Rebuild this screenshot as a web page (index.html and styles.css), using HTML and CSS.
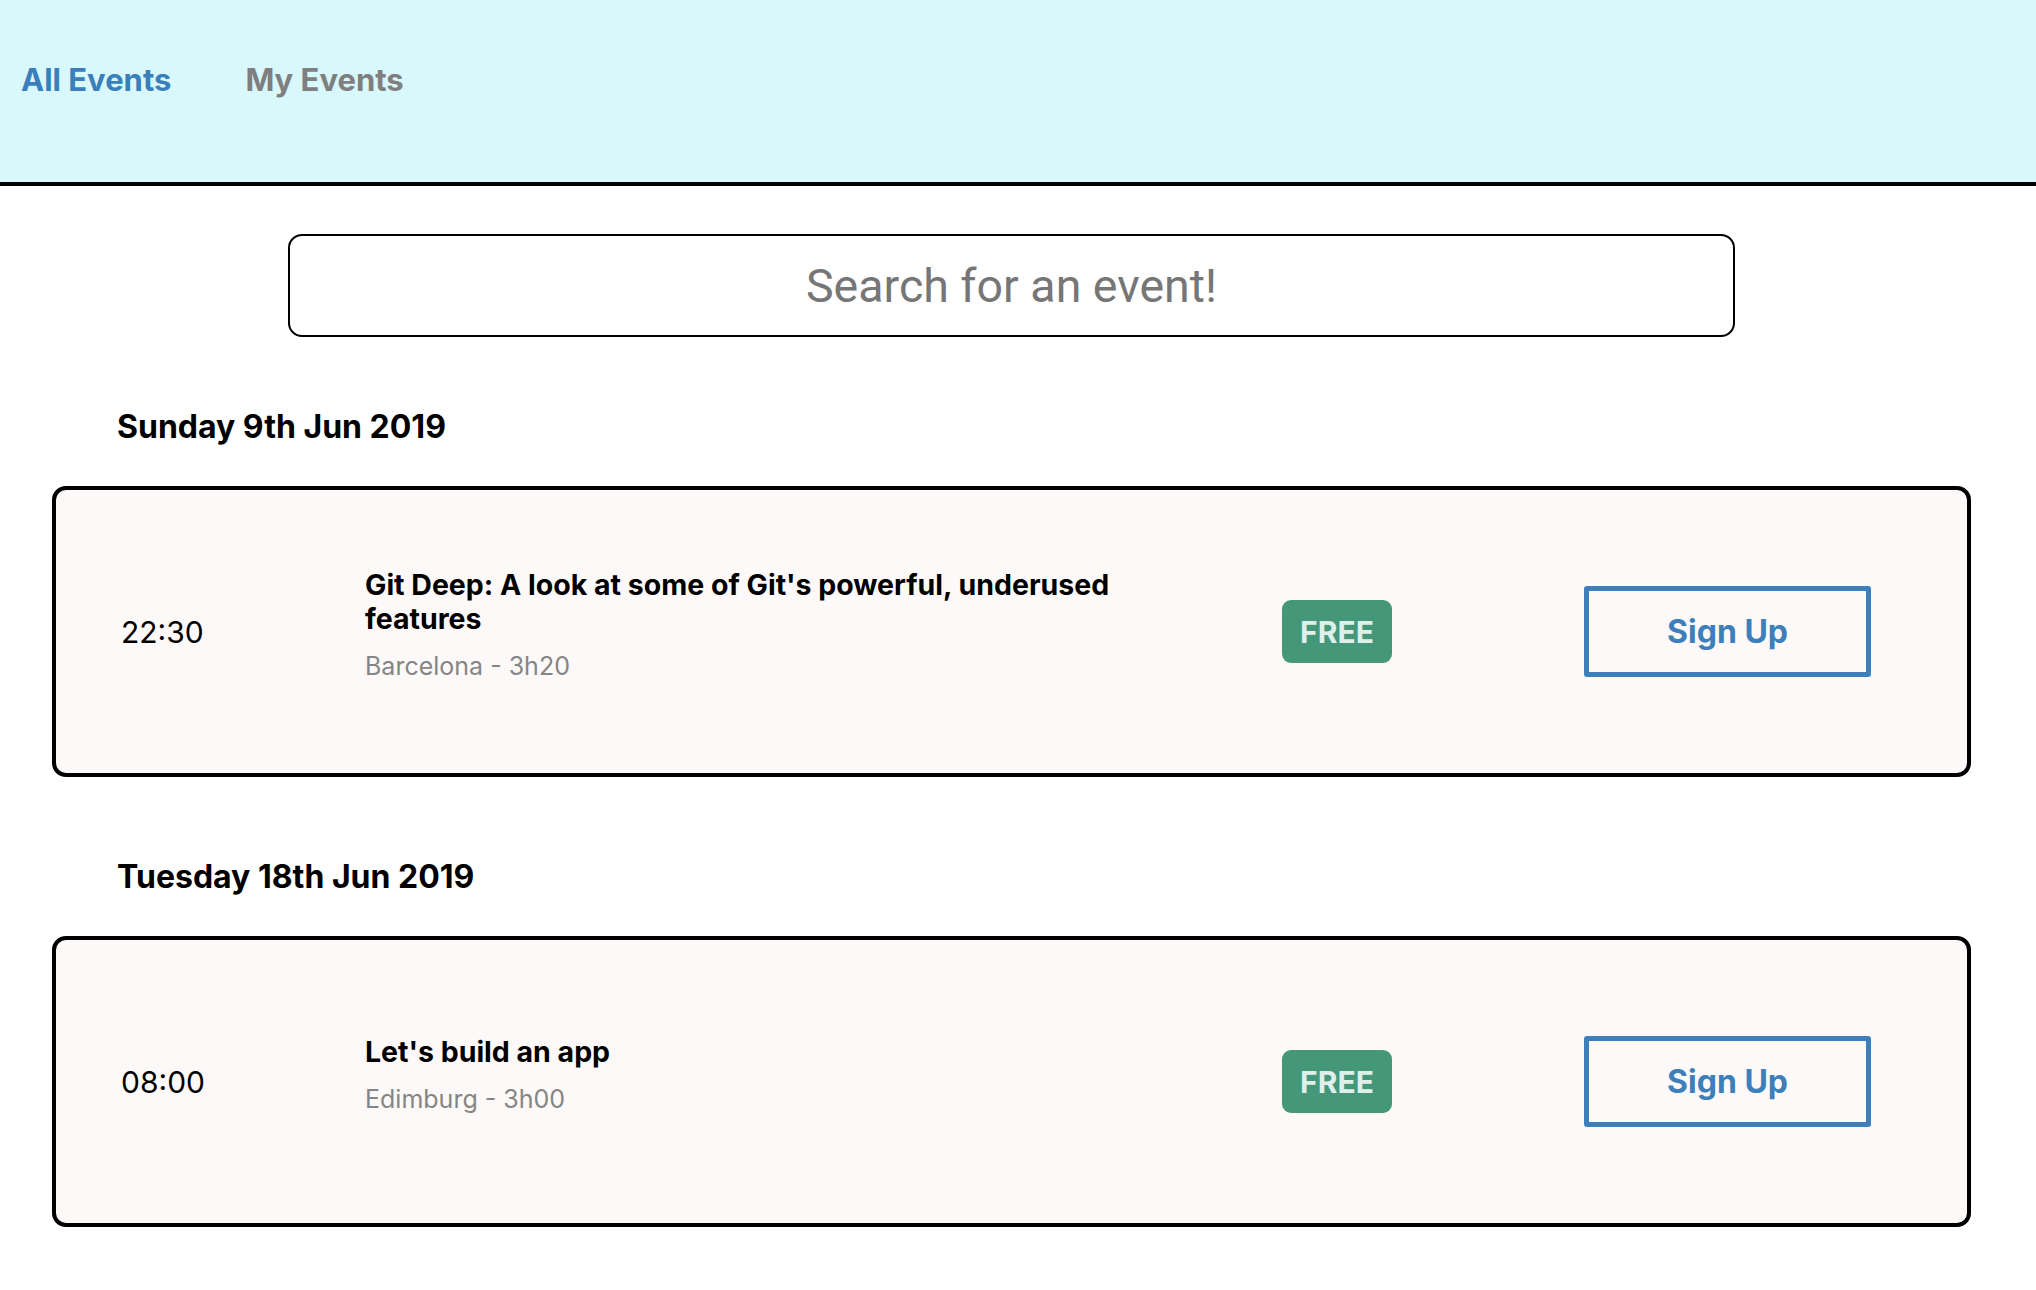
FILE: index.html
```html
<!DOCTYPE html>
<html lang="en">
<head>
<meta charset="utf-8">
<title>Events</title>
<link rel="stylesheet" href="styles.css">
</head>
<body>
<header class="topbar">
  <nav class="nav">
    <a class="nav-link active" href="#">All Events</a>
    <a class="nav-link" href="#">My Events</a>
  </nav>
</header>
<main class="content">
  <input class="search" type="text" placeholder="Search for an event!">

  <section class="day">
    <h2 class="day-title">Sunday 9th Jun 2019</h2>
    <div class="card">
      <div class="time">22:30</div>
      <div class="info">
        <div class="title">Git Deep: A look at some of Git's powerful, underused features</div>
        <div class="meta">Barcelona - 3h20</div>
      </div>
      <div class="price"><span class="badge">FREE</span></div>
      <button class="signup">Sign Up</button>
    </div>
  </section>

  <section class="day">
    <h2 class="day-title">Tuesday 18th Jun 2019</h2>
    <div class="card">
      <div class="time">08:00</div>
      <div class="info">
        <div class="title">Let's build an app</div>
        <div class="meta">Edimburg - 3h00</div>
      </div>
      <div class="price"><span class="badge">FREE</span></div>
      <button class="signup">Sign Up</button>
    </div>
  </section>
</main>
</body>
</html>
```

FILE: styles.css
```css
* { box-sizing: border-box; }
html, body { margin: 0; padding: 0; background: #ffffff; }
body {
  font-family: Inter, "Noto Sans", "Liberation Sans", sans-serif;
  color: #000;
}
.topbar {
  height: 186px;
  background: #d9f8fb;
  border-bottom: 4px solid #000;
  padding-top: 60px;
}
.nav {
  display: flex;
  gap: 74px;
  padding-left: 21px;
}
.nav-link {
  font-size: 31px;
  font-weight: 700;
  color: #7f7f7f;
  text-decoration: none;
  line-height: 39px;
}
.nav-link.active { color: #3b7ebc; }

.content {
  padding-left: 52px;
  width: 1971px;
}
.search {
  display: block;
  margin: 48px 0 0 236px;
  width: 1447px;
  height: 103px;
  border: 2px solid #000;
  border-radius: 14px;
  background: #fff;
  font-family: Roboto, "Liberation Sans", sans-serif;
  font-size: 46.5px;
  text-align: center;
  color: #222;
  outline: none;
}
.search::placeholder { color: #767676; }

.day { margin-top: 70px; }
.day + .day { margin-top: 80px; }
.day-title {
  margin: 0 0 40px 65px;
  font-size: 32px;
  font-weight: 700;
  line-height: 39px;
}
.card {
  display: flex;
  align-items: center;
  height: 291px;
  border: 4px solid #000;
  border-radius: 14px;
  background: #fdf9f8;
  padding-left: 65px;
}
.time {
  width: 244px;
  flex: none;
  font-size: 30px;
  font-weight: 400;
}
.info {
  width: 917px;
  flex: none;
}
.title {
  max-width: 800px;
  font-size: 28.5px;
  font-weight: 700;
  line-height: 34px;
}
.meta {
  margin: 14px 0 13px;
  font-size: 25px;
  color: #858585;
  line-height: 32px;
}
.price { width: 302px; flex: none; }
.badge {
  display: inline-flex;
  align-items: center;
  justify-content: center;
  width: 110px;
  height: 63px;
  border-radius: 9px;
  background: #45977a;
  color: #def0e9;
  font-size: 30px;
  font-weight: 700;
}
.signup {
  width: 287px;
  height: 91px;
  border: 5px solid #3c7fba;
  border-radius: 3px;
  background: transparent;
  color: #3c7fba;
  font-family: Inter, "Noto Sans", sans-serif;
  font-size: 32px;
  font-weight: 700;
  cursor: pointer;
}
```
